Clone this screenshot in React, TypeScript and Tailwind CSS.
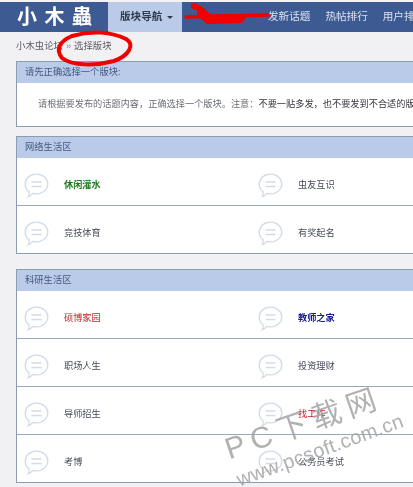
const font = "font-['Liberation_Sans','Noto_Sans_CJK_SC',sans-serif]";

const BubbleIcon = () => (
  <svg width="25" height="25" viewBox="0 0 25 25" fill="none" stroke="#d3dbe8" strokeWidth="1.3" className="shrink-0">
    <path d="M12.5 1.2c6.3 0 11.3 4.3 11.3 9.8s-5 9.8-11.3 9.8c-1.2 0-2.4-.2-3.500-.5-1.300 1.500-2.900 2.700-4.700 3.400.7-1.500 1-3 .9-4.800C2.700 17.100 1.200 14.200 1.200 11c0-5.500 5-9.800 11.300-9.800z" />
    <path d="M7.500 9h10M7.500 13.500h10" />
  </svg>
);

const Forum = ({ name, color = "text-[#454a57]" }: { name: string; color?: string }) => (
  <div className="flex w-[234px] items-center pl-[7px] pt-2">
    <BubbleIcon />
    <span className={`ml-[15px] text-[9.2px] ${color}`}>{name}</span>
  </div>
);

const Row = ({ children }: { children: React.ReactNode }) => (
  <div className="flex h-[48px] border-b border-[#9aa9ba] bg-white last:h-[47px] last:border-b-0">{children}</div>
);

const Section = ({ title, children, className = "" }: { title: string; children: React.ReactNode; className?: string }) => (
  <section className={`w-[470px] border border-[#8c9db3] bg-white ${className}`}>
    <h2 className="flex h-[21px] items-center bg-[#b9cbe9] pl-2 text-[9.3px] font-normal text-[#42587f]">{title}</h2>
    {children}
  </section>
);

export default function App() {
  return (
    <div className={`relative h-[487px] w-[413px] overflow-hidden bg-[#f1f0f2] blur-[0.5px] ${font}`}>
      <div className="h-[2px] bg-[#f4f4f6]" />
      <nav className="flex h-[30px] items-center bg-[#3e5a92] text-[10.600px] text-[#d9e2f0]">
        <div className="w-[108px] shrink-0 whitespace-nowrap pl-[17px] text-[20px] font-bold leading-none tracking-[7.5px] text-white">小木蟲</div>
        <div className="flex h-full w-[74px] shrink-0 items-center bg-[#b9cbe9] pl-3 font-bold text-[#2f3a4c]">
          版块导航
          <span className="ml-[5px] mt-px border-x-[3px] border-t-[3px] border-x-transparent border-t-[#2f3a4c]" />
        </div>
        <div className="flex gap-[15px] pl-[86px] whitespace-nowrap">
          <span>发新话题</span>
          <span>热帖排行</span>
          <span>用户排行</span>
        </div>
      </nav>

      <div className="flex h-[29px] items-center gap-[3px] pl-4 text-[9.4px] text-[#5a5d66]">
        <span>小木虫论坛</span>
        <span className="text-[#8a8c94]">»</span>
        <span>选择版块</span>
      </div>

      <main className="pl-4">
        <Section title="请先正确选择一个版块:">
          <p className="flex h-[43px] items-center whitespace-nowrap pl-[21px] text-[9.200px] text-[#6b6e78]">
            请根据要发布的话题内容，正确选择一个版块。注意：
            <b className="font-normal text-[#33363f]">不要一贴多发，也不要发到不合适的版块</b>
          </p>
        </Section>

        <Section title="网络生活区" className="mt-[9px]">
          <Row>
            <Forum name="休闲灌水" color="text-[#1f7a1f] font-bold" />
            <Forum name="虫友互识" />
          </Row>
          <Row>
            <Forum name="竞技体育" />
            <Forum name="有奖起名" />
          </Row>
        </Section>

        <Section title="科研生活区" className="mt-[15px]">
          <Row>
            <Forum name="硕博家园" color="text-[#c0282c]" />
            <Forum name="教师之家" color="text-[#1a1a8c] font-bold" />
          </Row>
          <Row>
            <Forum name="职场人生" />
            <Forum name="投资理财" />
          </Row>
          <Row>
            <Forum name="导师招生" />
            <Forum name="找工作" color="text-[#c0182c]" />
          </Row>
          <Row>
            <Forum name="考博" />
            <Forum name="公务员考试" />
          </Row>
        </Section>
      </main>

      {/* red marker scribbles on top of the screenshot */}
      <svg className="absolute left-0 top-0" width="413" height="80" fill="none" stroke="#f00000" strokeLinecap="round" strokeLinejoin="round">
        <path d="M186 17 L268 15" strokeWidth="3.500" />
        <path d="M194 6 C199 8 204 11 208 17 L242 18" strokeWidth="6" />
        <path d="M200 14 L208 21 L240 20" strokeWidth="6" />
        <path d="M72 36 C92 30 112 32 126 39 C136 45 128 56 114 61 C96 66 72 66 62 58 C56 50 58 42 72 36 Z" strokeWidth="4" />
      </svg>

      {/* download site watermark */}
      <div className="absolute left-[226px] top-[435px] origin-left -rotate-[19deg] whitespace-nowrap text-[30px] leading-none tracking-[6.5px] text-[#a3a3a3]/85">PC下载网</div>
      <div className="absolute left-[237px] top-[470px] origin-left -rotate-[20deg] whitespace-nowrap text-[20px] leading-none tracking-[0.3px] text-[#a3a3a3]/85">www.pcsoft.com.cn</div>
    </div>
  );
}
